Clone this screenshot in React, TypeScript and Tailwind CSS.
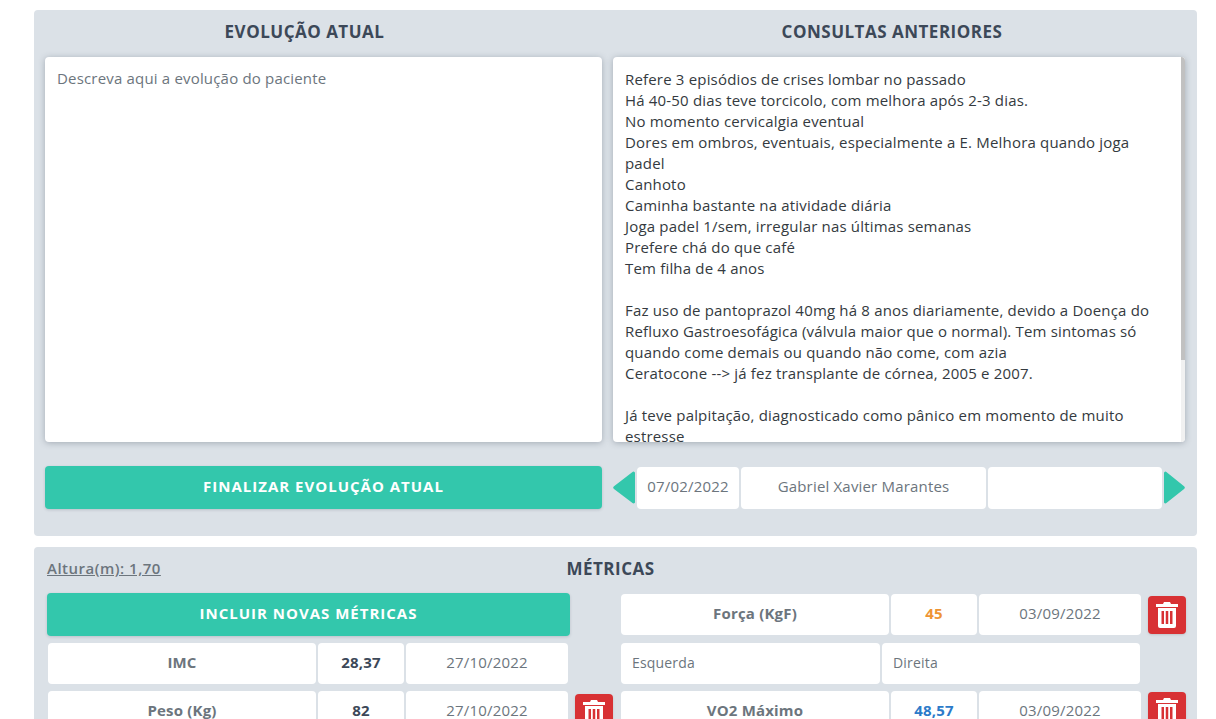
import { ReactNode } from "react";

const previousNotes = [
  "Refere 3 episódios de crises lombar no passado",
  "Há 40-50 dias teve torcicolo, com melhora após 2-3 dias.",
  "No momento cervicalgia eventual",
  "Dores em ombros, eventuais, especialmente a E. Melhora quando joga padel",
  "Canhoto",
  "Caminha bastante na atividade diária",
  "Joga padel 1/sem, irregular nas últimas semanas",
  "Prefere chá do que café",
  "Tem filha de 4 anos",
  "",
  "Faz uso de pantoprazol 40mg há 8 anos diariamente, devido a Doença do Refluxo Gastroesofágica (válvula maior que o normal). Tem sintomas só quando come demais ou quando não come, com azia",
  "Ceratocone --> já fez transplante de córnea, 2005 e 2007.",
  "",
  "Já teve palpitação, diagnosticado como pânico em momento de muito estresse",
];

function TrashButton({ className }: { className: string }) {
  return (
    <button className={`flex h-[38px] w-[38px] shrink-0 items-center justify-center rounded bg-[#d83134] shadow-sm ${className}`}>
      <svg width="22" height="26" viewBox="0 0 22 26" fill="#fff">
        <path d="M8 0h6l1 2h7v3H0V2h7z" />
        <path
          fillRule="evenodd"
          d="M2 6h18v18a2 2 0 0 1-2 2H4a2 2 0 0 1-2-2zM5.500 9v13h2.500V9zm4.250 0v13h2.500V9zm4.250 0v13h2.500V9z"
        />
      </svg>
    </button>
  );
}

function Cell({ className, children }: { className: string; children?: ReactNode }) {
  return <div className={`flex h-[41px] items-center justify-center rounded bg-white pb-[3px] ${className}`}>{children}</div>;
}

function MetricRow({
  name,
  value,
  date,
  valueColor,
}: {
  name: string;
  value: string;
  date: string;
  valueColor: string;
}) {
  return (
    <div className="flex gap-0.5">
      <Cell className="w-[268px] font-bold text-[#6c757d]">{name}</Cell>
      <Cell className={`w-[86px] font-bold ${valueColor}`}>{value}</Cell>
      <Cell className="w-[162px] text-[#6c757d]">{date}</Cell>
    </div>
  );
}

export default function App() {
  return (
    <div
      className="h-[719px] overflow-hidden bg-white pt-2.5 pl-[34px] text-[15px] tracking-[0.18px] text-[#343a40]"
      style={{ fontFamily: '"Open Sans", sans-serif' }}
    >
      {/* Evolução + consultas */}
      <section className="h-[526px] w-[1163px] rounded bg-[#dbe1e7] px-[11px]">
        <div className="flex gap-[11px]">
          {/* Left column */}
          <div className="w-[557px]">
            <h2 className="flex h-[43px] items-center justify-center pr-[38px] text-[17px] font-bold tracking-[0.5px] text-[#3c4858]">
              EVOLUÇÃO ATUAL
            </h2>
            <div className="mt-1 h-[385px] rounded bg-white px-3 py-[11px] leading-[21px] text-[#6c757d] shadow-[0_1px_6px_rgba(60,72,88,0.35)]">
              Descreva aqui a evolução do paciente
            </div>
            <button className="mt-6 h-[43px] w-full rounded bg-[#33c7ac] pb-0.5 text-[15px] font-bold tracking-[1px] text-white shadow-[0_1px_3px_rgba(60,72,88,0.2)]">
              FINALIZAR EVOLUÇÃO ATUAL
            </button>
          </div>

          {/* Right column */}
          <div className="w-[572px]">
            <h2 className="flex h-[43px] items-center justify-center pr-[14px] text-[17px] font-bold tracking-[0.5px] text-[#3c4858]">
              CONSULTAS ANTERIORES
            </h2>
            <div className="relative mt-1 h-[385px] overflow-hidden rounded bg-white pt-3 pr-[30px] pl-3 leading-[21px] text-[#343a40] shadow-[0_1px_6px_rgba(60,72,88,0.35)]">
              {previousNotes.map((line, i) => (
                <p key={i} className="min-h-[21px]">
                  {line}
                </p>
              ))}
              {/* Scrollbar */}
              <div className="absolute top-0 right-0 h-full w-[4px] bg-[#f1f1f1]">
                <div className="h-[303px] bg-[#c1c1c1]" />
              </div>
            </div>
            <div className="mt-6 flex h-[43px] items-center gap-0.5">
              <svg width="22" height="33" viewBox="0 0 22 36" preserveAspectRatio="none" className="shrink-0">
                <path d="M22 2v32a1.500 1.500 0 0 1-2.500 1L1 19.500a2 2 0 0 1 0-3L19.500 1A1.500 1.500 0 0 1 22 2z" fill="#33c7ac" />
              </svg>
              <div className="flex gap-0.5">
                <Cell className="h-[42px] w-[102px] text-[#6c757d]">07/02/2022</Cell>
                <Cell className="h-[42px] w-[245px] text-[#6c757d]">Gabriel Xavier Marantes</Cell>
                <Cell className="h-[42px] w-[174px]" />
              </div>
              <svg width="21" height="33" viewBox="0 0 22 36" preserveAspectRatio="none" className="shrink-0">
                <path d="M0 2v32a1.500 1.500 0 0 0 2.500 1L21 19.500a2 2 0 0 0 0-3L2.500 1A1.500 1.500 0 0 0 0 2z" fill="#33c7ac" />
              </svg>
            </div>
          </div>
        </div>
      </section>

      {/* Métricas */}
      <section className="mt-[11px] h-[300px] w-[1163px] rounded bg-[#dbe1e7] pr-[11px] pl-[13px]">
        <div className="relative flex h-[44px] items-center justify-center pr-[12px]">
          <span className="absolute top-[10px] left-0 text-[15px] font-semibold tracking-[0.5px] text-[#6c757d] underline">
            Altura(m): 1,70
          </span>
          <h2 className="text-[17px] font-bold tracking-[0.5px] text-[#3c4858]">MÉTRICAS</h2>
        </div>
        <div className="mt-0.5 flex justify-between">
          <div className="w-[566px]">
            <button className="h-[43px] w-[523px] rounded bg-[#33c7ac] pb-0.5 text-[15px] font-bold tracking-[1px] text-white shadow-[0_1px_3px_rgba(60,72,88,0.2)]">
              INCLUIR NOVAS MÉTRICAS
            </button>
            <div className="mt-[7px] flex flex-col gap-[7px] pl-px">
              <MetricRow name="IMC" value="28,37" date="27/10/2022" valueColor="text-[#3c4858]" />
              <div className="flex gap-[7px]">
                <MetricRow name="Peso (Kg)" value="82" date="27/10/2022" valueColor="text-[#3c4858]" />
                <TrashButton className="mt-[3px]" />
              </div>
            </div>
          </div>
          <div className="flex w-[565px] flex-col gap-[7px] pt-px">
            <div className="flex items-center gap-[7px]">
              <MetricRow name="Força (KgF)" value="45" date="03/09/2022" valueColor="text-[#ee9433]" />
              <TrashButton className="" />
            </div>
            <div className="mt-px flex gap-0.5">
              <Cell className="w-[259px] !justify-start px-[11px] text-[14px] text-[#6c757d]">Esquerda</Cell>
              <Cell className="w-[258px] !justify-start px-[11px] text-[14px] text-[#6c757d]">Direita</Cell>
            </div>
            <div className="flex gap-[7px]">
              <MetricRow name="VO2 Máximo" value="48,57" date="03/09/2022" valueColor="text-[#2c7bc9]" />
              <TrashButton className="mt-px" />
            </div>
          </div>
        </div>
      </section>
    </div>
  );
}
